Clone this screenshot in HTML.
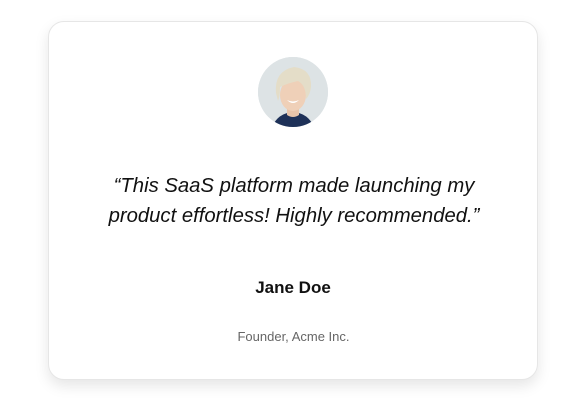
<!DOCTYPE html>
<html><head><style>
body{margin:0;width:582px;height:401px;background:#fff;font-family:"Liberation Sans",sans-serif;position:relative;overflow:hidden}
.card{position:absolute;left:48px;top:21px;width:490px;height:359px;border:1px solid #e6e6e6;border-radius:16px;box-sizing:border-box;box-shadow:0 6px 14px rgba(0,0,0,0.10);background:#fff}
.av{position:absolute;left:258px;top:57px;width:70px;height:70px;border-radius:50%;overflow:hidden;background:#dfe4e6}
.q{position:absolute;left:0;width:588px;top:171px;text-align:center;font-style:italic;font-size:20.3px;line-height:30px;color:#111}
.n{position:absolute;left:0;width:586px;top:278px;text-align:center;font-weight:bold;font-size:17px;color:#111}
.t{position:absolute;left:0;width:587px;top:329px;text-align:center;font-size:13px;color:#666}
</style></head><body>
<div class="card"></div>
<div class="av"><svg width="70" height="70" viewBox="0 0 70 70">
<rect width="70" height="70" fill="#dde3e5"/>
<path d="M14 70 Q20 56 35 55 Q50 56 56 70Z" fill="#1e3158"/>
<path d="M29 50 L29 58 Q35 62 41 58 L41 50Z" fill="#e8c4aa"/>
<ellipse cx="35" cy="38" rx="13" ry="16" fill="#efd0b8"/>
<path d="M18 36 Q16 14 36 10 Q54 12 53 30 Q52 38 48 42 Q48 28 40 24 Q30 26 22 30 Q22 40 20 44Z" fill="#e4ddc8"/>
<path d="M29 43 Q35 49 41 43 Q35 46 29 43Z" fill="#fff"/>
</svg></div>
<div class="q">“This SaaS platform made launching my<br>product effortless! Highly recommended.”</div>
<div class="n">Jane Doe</div>
<div class="t">Founder, Acme Inc.</div>
</body></html>
